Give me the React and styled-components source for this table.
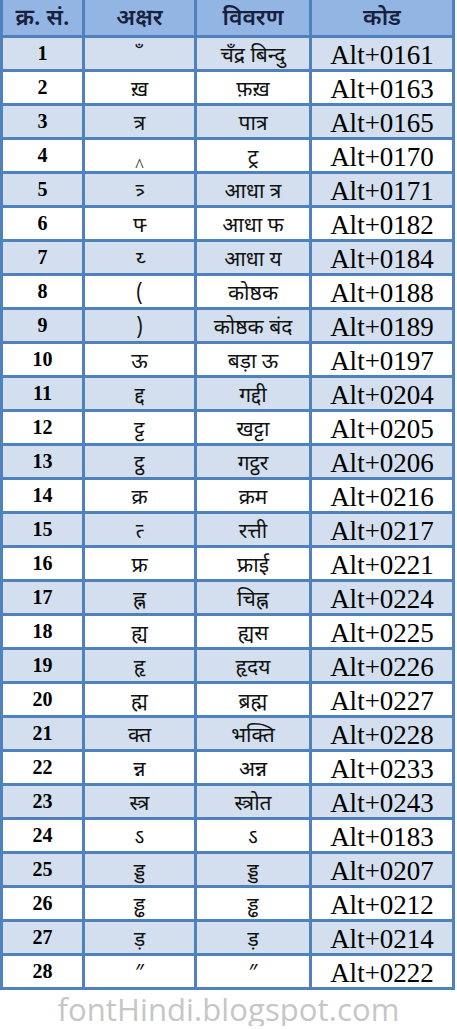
import React from "react";
import styled, { createGlobalStyle } from "styled-components";

const GlobalStyle = createGlobalStyle`
  html, body { margin: 0; padding: 0; background: #ffffff; }
  body { width: 457px; overflow: hidden; }
`;

const DEV = `"Noto Sans Devanagari", "Lohit Devanagari", "Mangal", "Noto Sans", sans-serif`;
const SERIF = `"Liberation Serif", "Times New Roman", serif`;

const Page = styled.div`
  width: 457px;
  display: flex;
  flex-direction: column;
  align-items: flex-start;
`;

const Table = styled.div`
  display: grid;
  grid-template-columns: 79px 109px 112px 140px;
  grid-template-rows: 35px;
  grid-auto-rows: 31px;
  gap: 3px;
  padding: 0 3px 3px 3px;
  background: #4f81bd;
`;

const Cell = styled.div`
  background: ${(p) => (p.$shade ? "#d3dfee" : "#ffffff")};
  display: flex;
  justify-content: center;
  align-items: flex-start;
  white-space: nowrap;
  overflow: visible;
  color: #000000;
  line-height: 1;
`;

const HeadCell = styled(Cell)`
  background: #92b5e3;
  font-family: ${DEV};
  font-size: 23px;
  font-weight: 600;
  color: #17213d;
  padding-top: 8px;
`;

const NumCell = styled(Cell)`
  font-family: ${SERIF};
  font-size: 20px;
  font-weight: 700;
  padding-top: 5px;
`;

const DevCell = styled(Cell)`
  font-family: ${DEV};
  font-size: 21px;
  padding-top: 9px;
  color: #111111;
`;

const CodeCell = styled(Cell)`
  font-family: ${SERIF};
  font-size: 27px;
  padding-top: 4px;
`;

const Caret = styled.span`
  font-family: ${SERIF};
  font-size: 18px;
  padding-top: ${(p) => p.$drop || 0}px;
`;

const Footer = styled.div`
  width: 457px;
  margin-top: 2px;
  text-align: center;
  font-family: "Open Sans", "Noto Sans", sans-serif;
  font-size: 31px;
  line-height: 34px;
  color: #c6c6c6;
  letter-spacing: 0.1px;
`;

const NB = "\u00A0";
const ZWJ = "\u200D";

const rows = [
  [NB + "\u0901", "चँद्र बिन्दु", "0161"],
  ["ख़", "फ़ख़", "0163"],
  ["त्र", "पात्र", "0165"],
  ["^", "ट्र", "0170"],
  ["त्र्" + ZWJ, "आधा त्र", "0171"],
  ["फ्" + ZWJ, "आधा फ", "0182"],
  ["य्" + ZWJ, "आधा य", "0184"],
  ["(", "कोष्ठक", "0188"],
  [")", "कोष्ठक बंद", "0189"],
  ["ऊ", "बड़ा ऊ", "0197"],
  ["द्द", "गद्दी", "0204"],
  ["ट्ट", "खट्टा", "0205"],
  ["ट्ठ", "गट्ठर", "0206"],
  ["क्र", "क्रम", "0216"],
  ["त्" + ZWJ, "रत्ती", "0217"],
  ["फ्र", "फ्राई", "0221"],
  ["ह्न", "चिह्न", "0224"],
  ["ह्य", "ह्यस", "0225"],
  ["हृ", "हृदय", "0226"],
  ["ह्म", "ब्रह्म", "0227"],
  ["क्त", "भक्ति", "0228"],
  ["न्न", "अन्न", "0233"],
  ["स्त्र", "स्त्रोत", "0243"],
  ["ऽ", "ऽ", "0183"],
  ["ड्ड", "ड्ड", "0207"],
  ["ड्ढ", "ड्ढ", "0212"],
  ["ड़", "ड़", "0214"],
  ["″", "″", "0222"],
];

export default function App() {
  return (
    <Page>
      <GlobalStyle />
      <Table>
        <HeadCell>क्र. सं.</HeadCell>
        <HeadCell>अक्षर</HeadCell>
        <HeadCell>विवरण</HeadCell>
        <HeadCell>कोड</HeadCell>
        {rows.map(([ch, desc, code], i) => {
          const shade = i % 2 === 0;
          return (
            <React.Fragment key={code + i}>
              <NumCell $shade={shade}>{i + 1}</NumCell>
              <DevCell $shade={shade}>
                {ch === "^" ? <Caret $drop={8}>^</Caret> : ch}
              </DevCell>
              <DevCell $shade={shade}>{desc}</DevCell>
              <CodeCell $shade={shade}>Alt+{code}</CodeCell>
            </React.Fragment>
          );
        })}
      </Table>
      <Footer>fontHindi.blogspot.com</Footer>
    </Page>
  );
}
